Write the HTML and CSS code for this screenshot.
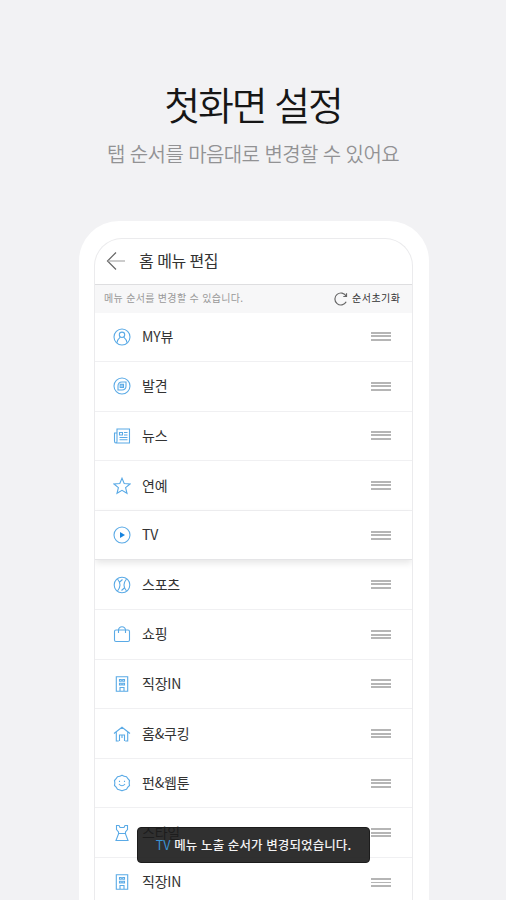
FILE: index.html
```html
<!DOCTYPE html>
<html lang="ko">
<head>
<meta charset="utf-8">
<title>첫화면 설정</title>
<link rel="stylesheet" href="styles.css">
</head>
<body>
<h1 class="title">첫화면 설정</h1>
<p class="subtitle">탭 순서를 마음대로 변경할 수 있어요</p>
<main class="phone">
  <div class="screen">
    <header class="header">
      <svg class="back" viewBox="0 0 20 20"><path d="M10 1.500 1.500 10 10 18.500"/><path class="shaft" d="M2 10H19"/></svg>
      <h2 class="heading">홈 메뉴 편집</h2>
    </header>
    <div class="notice">
      <span class="hint">메뉴 순서를 변경할 수 있습니다.</span>
      <span class="reset"><svg class="reload" viewBox="0 0 14 14"><path d="M12.200 4.200A6 6 0 1 0 12.200 9.800M12.500 1.200V4.500H9.300"/></svg><span class="reset-text">순서초기화</span></span>
    </div>
    <ul class="list">
      <li class="row"><svg class="icon" viewBox="0 0 18 18"><circle cx="9" cy="9" r="8"/><circle cx="9" cy="6.800" r="2.700"/><path d="M4 14.800C4.300 11.500 6 10.300 7.300 9.200M14 14.800C13.700 11.500 12 10.300 10.700 9.200"/></svg><span class="label">MY뷰</span><i class="grip"></i></li>
      <li class="row"><svg class="icon" viewBox="0 0 18 18"><circle cx="9" cy="9" r="8"/><path d="M13 5H9Q5 5.200 5 9V13H9Q13 12.800 13 9Z"/><path d="M7.200 7.300H10.500V10.500H7.200ZM9 7.500V10.500"/></svg><span class="label">발견</span><i class="grip"></i></li>
      <li class="row"><svg class="icon" viewBox="0 0 18 18"><path d="M4 2H16.500V16H3Q1.500 16 1.500 14V6H4ZM4 6V14Q4 16 3 16M6.500 5.500H9.500V8H6.500ZM11 5.500H14.500M11 8H14.500M6.500 10.500H14.500M6.500 12.800H14.500"/></svg><span class="label">뉴스</span><i class="grip"></i></li>
      <li class="row"><svg class="icon" viewBox="0 0 18 18"><path d="M9 1.200 11.200 6.500 17 7 12.600 10.700 14 16.300 9 13.300 4 16.300 5.400 10.700 1 7 6.800 6.500Z"/></svg><span class="label">연예</span><i class="grip"></i></li>
      <li class="row lifted"><svg class="icon" viewBox="0 0 18 18"><circle cx="9" cy="9" r="8"/><path class="solid" d="M7 6 12 9 7 12Z"/></svg><span class="label">TV</span><i class="grip"></i></li>
      <li class="row"><svg class="icon" viewBox="0 0 18 18"><circle cx="9" cy="9" r="7.800"/><path d="M4.500 3Q9.500 9 4.500 15M13.500 3Q8.500 9 13.500 15M6.700 6 9.500 3.500M11.300 12 8.500 14.500"/></svg><span class="label">스포츠</span><i class="grip"></i></li>
      <li class="row"><svg class="icon" viewBox="0 0 18 18"><rect x="1.500" y="5" width="15" height="11.500" rx="1.500"/><path d="M5.500 8V5Q6 1.800 9 1.800T12.500 5V8"/></svg><span class="label">쇼핑</span><i class="grip"></i></li>
      <li class="row"><svg class="icon" viewBox="0 0 18 18"><path d="M3.300 1.700H14.700V16.300H3.300ZM7 16V12.500H11V16M6.500 4.500H8.300V6.300H6.500ZM9.700 4.500H11.500V6.300H9.700ZM6.500 8.300H8.300V10H6.500ZM9.700 8.300H11.500V10H9.700Z"/></svg><span class="label">직장IN</span><i class="grip"></i></li>
      <li class="row"><svg class="icon" viewBox="0 0 18 18"><path d="M1 8.500 9 2.300 17 8.500M3.300 7V16H5.800M14.700 7V16H12.200M6.500 16V10H11.500V16M9 10V13"/></svg><span class="label">홈&amp;쿠킹</span><i class="grip"></i></li>
      <li class="row"><svg class="icon" viewBox="0 0 18 18"><path d="M9 1.200Q11 2.200 13.500 2.800 14.700 4.800 16.500 6.500 15.800 9 16.500 11.500 14.700 13 13.500 15.200 11 15.800 9 16.800 7 15.800 4.500 15.200 3.300 13 1.500 11.500 2.200 9 1.500 6.500 3.300 4.800 4.500 2.800 7 2.200 9 1.200ZM6 10Q9 13.500 12 10M6.500 6.800V8M11.500 6.800V8"/></svg><span class="label">펀&amp;웹툰</span><i class="grip"></i></li>
      <li class="row"><svg class="icon" viewBox="0 0 18 18"><path d="M3.500 1.500V5.500L5.500 8V10L3 16.500H15L12.500 10V8L14.500 5.500V1.500H12L11 3.500H7L6 1.500ZM5.500 9.500H12.500"/></svg><span class="label">스타일</span><i class="grip"></i></li>
      <li class="row"><svg class="icon" viewBox="0 0 18 18"><path d="M3.300 1.700H14.700V16.300H3.300ZM7 16V12.500H11V16M6.500 4.500H8.300V6.300H6.500ZM9.700 4.500H11.500V6.300H9.700ZM6.500 8.300H8.300V10H6.500ZM9.700 8.300H11.500V10H9.700Z"/></svg><span class="label">직장IN</span><i class="grip"></i></li>
    </ul>
  </div>
  <div class="toast"><span class="toast-text"><span class="accent">TV</span> 메뉴 노출 순서가 변경되었습니다.</span></div>
</main>
</body>
</html>
```
FILE: styles.css
```css
* { box-sizing: border-box; }
body {
  margin: 0;
  height: 900px;
  overflow: hidden;
  background: #f2f2f4;
  color: #333;
  font-family: "Noto Sans CJK KR", sans-serif;
}
h1, h2, p, ul { margin: 0; padding: 0; font-weight: 400; }
.title {
  padding-top: 75px;
  line-height: 56px;
  font-size: 39px;
  font-weight: 350;
  letter-spacing: -2.1px;
  text-align: center;
  color: #161616;
}
.subtitle {
  height: 90px;
  padding-top: 9px;
  line-height: 28px;
  font-size: 20px;
  font-weight: 350;
  letter-spacing: -0.6px;
  text-align: center;
  color: #929294;
}
.phone {
  position: relative;
  width: 350px;
  height: 679px;
  margin: 0 auto 0 79px;
  padding: 17px 16px 0 15px;
  border-radius: 40px 40px 0 0;
  background: #fff;
}
.screen {
  height: 662px;
  border: 1px solid #ebebed;
  border-bottom: 0;
  border-radius: 28px 28px 0 0;
  overflow: hidden;
}
.header {
  display: flex;
  align-items: center;
  height: 45.5px;
  padding-left: 11px;
  border-bottom: 1px solid #dedee0;
}
.back { width: 20px; height: 20px; fill: none; stroke: #666; stroke-width: 1.2; }
.shaft { stroke: #aaa; }
.heading { margin-left: 13px; padding-bottom: 3px; font-size: 16px; letter-spacing: -0.5px; line-height: 22px; }
.notice {
  display: flex;
  align-items: center;
  justify-content: space-between;
  height: 28px;
  padding: 0 12px 0 9px;
  background: #f7f7f8;
  font-size: 10px;
}
.hint { color: #999; letter-spacing: 0.32px; line-height: 14px; padding-bottom: 1px; }
.reset { display: flex; align-items: center; gap: 4px; line-height: 14px; }
.reset-text { padding-bottom: 1px; letter-spacing: 0.5px; margin-right: -0.5px; }
.reload { width: 14px; height: 14px; fill: none; stroke: #666; stroke-width: 1.2; }
.list { list-style: none; }
.row {
  display: flex;
  align-items: center;
  height: 49.6px;
  padding: 0 21px 0 18px;
  border-bottom: 1px solid #f0f0f2;
}
.lifted {
  position: relative;
  border-bottom-color: #e5e5e7;
  background: #fff;
  box-shadow: 0 3px 7px rgba(0, 0, 0, 0.1);
}
.icon { width: 18px; height: 18px; fill: none; stroke: #5aaae6; stroke-width: 1.1; }
.solid { fill: #1683df; stroke: none; }
.label { margin-left: 11px; padding-bottom: 2px; font-size: 14px; letter-spacing: -0.2px; line-height: 20px; }
.grip {
  width: 20px;
  height: 9px;
  margin-left: auto;
  border-top: 2px solid #b5b5b5;
  border-bottom: 2px solid #b5b5b5;
  background: linear-gradient(#fff 1.5px, #b5b5b5 1.5px, #b5b5b5 3.5px, #fff 3.5px);
}
.toast {
  position: absolute;
  left: 58px;
  top: 606px;
  display: flex;
  align-items: center;
  justify-content: center;
  width: 233px;
  height: 36px;
  border: 1px solid #1c1c1c;
  border-radius: 4px;
  background: rgba(28, 28, 28, 0.91);
  color: #f2f2f2;
  font-size: 12.5px;
  font-weight: 500;
  letter-spacing: 0.1px;
  line-height: 18px;
  white-space: nowrap;
}
.accent { color: #3b94d3; font-weight: 400; }
```
